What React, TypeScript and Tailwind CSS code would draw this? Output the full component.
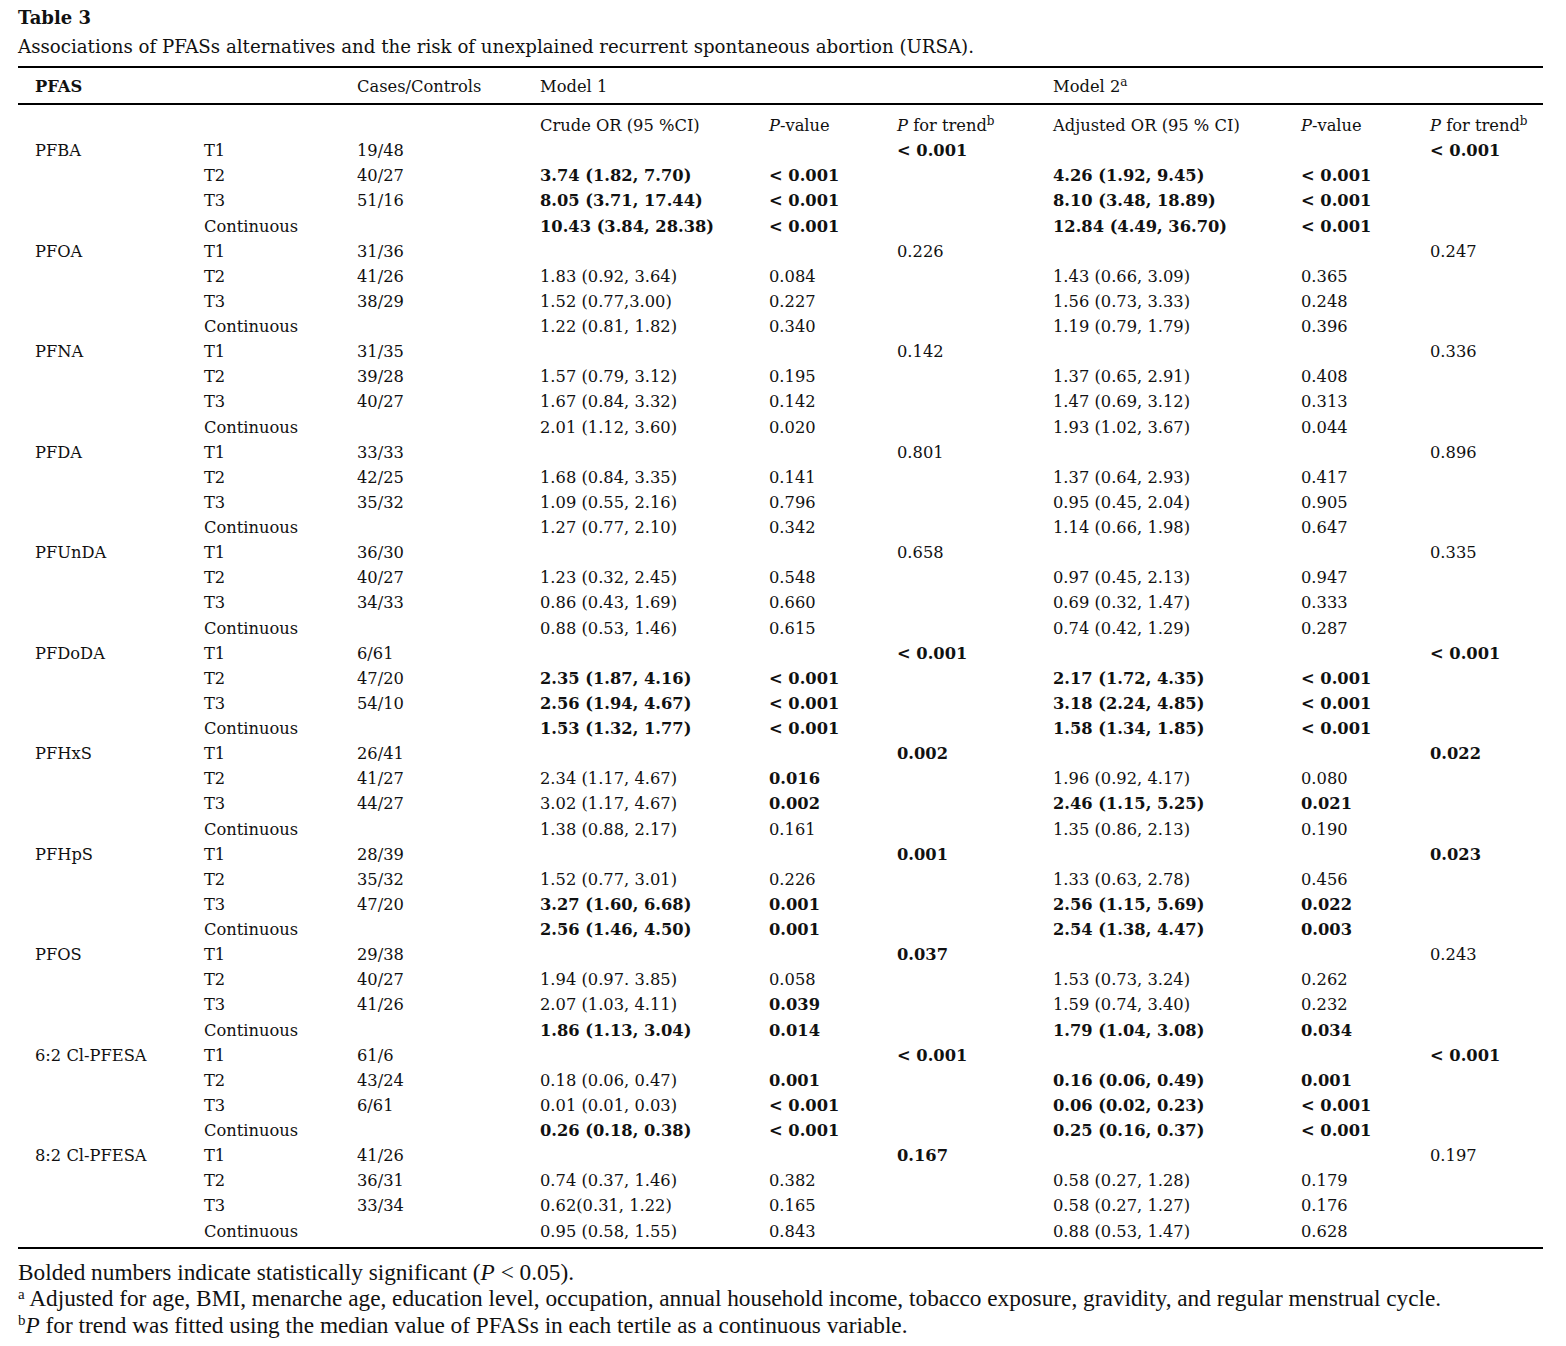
type Cell = { t: string; b?: boolean };

type Row = {
  name?: string;
  level: string;
  cc?: string;
  or1?: Cell;
  p1?: Cell;
  tr1?: Cell;
  or2?: Cell;
  p2?: Cell;
  tr2?: Cell;
};

const n = (t: string): Cell => ({ t });
const b = (t: string): Cell => ({ t, b: true });

// one block per compound: T1 / T2 / T3 / Continuous
function block(
  name: string,
  cc: [string, string, string],
  tr1: Cell,
  tr2: Cell,
  t2: [Cell, Cell, Cell, Cell],
  t3: [Cell, Cell, Cell, Cell],
  cont: [Cell, Cell, Cell, Cell],
): Row[] {
  return [
    { name, level: 'T1', cc: cc[0], tr1, tr2 },
    { level: 'T2', cc: cc[1], or1: t2[0], p1: t2[1], or2: t2[2], p2: t2[3] },
    { level: 'T3', cc: cc[2], or1: t3[0], p1: t3[1], or2: t3[2], p2: t3[3] },
    { level: 'Continuous', or1: cont[0], p1: cont[1], or2: cont[2], p2: cont[3] },
  ];
}

const rows: Row[] = [
  ...block('PFBA', ['19/48', '40/27', '51/16'], b('< 0.001'), b('< 0.001'),
    [b('3.74 (1.82, 7.70)'), b('< 0.001'), b('4.26 (1.92, 9.45)'), b('< 0.001')],
    [b('8.05 (3.71, 17.44)'), b('< 0.001'), b('8.10 (3.48, 18.89)'), b('< 0.001')],
    [b('10.43 (3.84, 28.38)'), b('< 0.001'), b('12.84 (4.49, 36.70)'), b('< 0.001')]),
  ...block('PFOA', ['31/36', '41/26', '38/29'], n('0.226'), n('0.247'),
    [n('1.83 (0.92, 3.64)'), n('0.084'), n('1.43 (0.66, 3.09)'), n('0.365')],
    [n('1.52 (0.77,3.00)'), n('0.227'), n('1.56 (0.73, 3.33)'), n('0.248')],
    [n('1.22 (0.81, 1.82)'), n('0.340'), n('1.19 (0.79, 1.79)'), n('0.396')]),
  ...block('PFNA', ['31/35', '39/28', '40/27'], n('0.142'), n('0.336'),
    [n('1.57 (0.79, 3.12)'), n('0.195'), n('1.37 (0.65, 2.91)'), n('0.408')],
    [n('1.67 (0.84, 3.32)'), n('0.142'), n('1.47 (0.69, 3.12)'), n('0.313')],
    [n('2.01 (1.12, 3.60)'), n('0.020'), n('1.93 (1.02, 3.67)'), n('0.044')]),
  ...block('PFDA', ['33/33', '42/25', '35/32'], n('0.801'), n('0.896'),
    [n('1.68 (0.84, 3.35)'), n('0.141'), n('1.37 (0.64, 2.93)'), n('0.417')],
    [n('1.09 (0.55, 2.16)'), n('0.796'), n('0.95 (0.45, 2.04)'), n('0.905')],
    [n('1.27 (0.77, 2.10)'), n('0.342'), n('1.14 (0.66, 1.98)'), n('0.647')]),
  ...block('PFUnDA', ['36/30', '40/27', '34/33'], n('0.658'), n('0.335'),
    [n('1.23 (0.32, 2.45)'), n('0.548'), n('0.97 (0.45, 2.13)'), n('0.947')],
    [n('0.86 (0.43, 1.69)'), n('0.660'), n('0.69 (0.32, 1.47)'), n('0.333')],
    [n('0.88 (0.53, 1.46)'), n('0.615'), n('0.74 (0.42, 1.29)'), n('0.287')]),
  ...block('PFDoDA', ['6/61', '47/20', '54/10'], b('< 0.001'), b('< 0.001'),
    [b('2.35 (1.87, 4.16)'), b('< 0.001'), b('2.17 (1.72, 4.35)'), b('< 0.001')],
    [b('2.56 (1.94, 4.67)'), b('< 0.001'), b('3.18 (2.24, 4.85)'), b('< 0.001')],
    [b('1.53 (1.32, 1.77)'), b('< 0.001'), b('1.58 (1.34, 1.85)'), b('< 0.001')]),
  ...block('PFHxS', ['26/41', '41/27', '44/27'], b('0.002'), b('0.022'),
    [n('2.34 (1.17, 4.67)'), b('0.016'), n('1.96 (0.92, 4.17)'), n('0.080')],
    [n('3.02 (1.17, 4.67)'), b('0.002'), b('2.46 (1.15, 5.25)'), b('0.021')],
    [n('1.38 (0.88, 2.17)'), n('0.161'), n('1.35 (0.86, 2.13)'), n('0.190')]),
  ...block('PFHpS', ['28/39', '35/32', '47/20'], b('0.001'), b('0.023'),
    [n('1.52 (0.77, 3.01)'), n('0.226'), n('1.33 (0.63, 2.78)'), n('0.456')],
    [b('3.27 (1.60, 6.68)'), b('0.001'), b('2.56 (1.15, 5.69)'), b('0.022')],
    [b('2.56 (1.46, 4.50)'), b('0.001'), b('2.54 (1.38, 4.47)'), b('0.003')]),
  ...block('PFOS', ['29/38', '40/27', '41/26'], b('0.037'), n('0.243'),
    [n('1.94 (0.97. 3.85)'), n('0.058'), n('1.53 (0.73, 3.24)'), n('0.262')],
    [n('2.07 (1.03, 4.11)'), b('0.039'), n('1.59 (0.74, 3.40)'), n('0.232')],
    [b('1.86 (1.13, 3.04)'), b('0.014'), b('1.79 (1.04, 3.08)'), b('0.034')]),
  ...block('6:2 Cl-PFESA', ['61/6', '43/24', '6/61'], b('< 0.001'), b('< 0.001'),
    [n('0.18 (0.06, 0.47)'), b('0.001'), b('0.16 (0.06, 0.49)'), b('0.001')],
    [n('0.01 (0.01, 0.03)'), b('< 0.001'), b('0.06 (0.02, 0.23)'), b('< 0.001')],
    [b('0.26 (0.18, 0.38)'), b('< 0.001'), b('0.25 (0.16, 0.37)'), b('< 0.001')]),
  ...block('8:2 Cl-PFESA', ['41/26', '36/31', '33/34'], b('0.167'), n('0.197'),
    [n('0.74 (0.37, 1.46)'), n('0.382'), n('0.58 (0.27, 1.28)'), n('0.179')],
    [n('0.62(0.31, 1.22)'), n('0.165'), n('0.58 (0.27, 1.27)'), n('0.176')],
    [n('0.95 (0.58, 1.55)'), n('0.843'), n('0.88 (0.53, 1.47)'), n('0.628')]),
];

const grid =
  'grid grid-cols-[169px_153px_183px_229px_128px_156px_248px_129px_113px] pl-[17px]';

function C({ c }: { c?: Cell }) {
  if (!c) return <div />;
  return <div className={c.b ? 'font-bold' : ''}>{c.t}</div>;
}

function TrendHead() {
  return (
    <div>
      <i>P</i> for trend<sup className="text-[12px]">b</sup>
    </div>
  );
}

export default function App() {
  return (
    <div className="min-h-[1346px] bg-white px-[18px] pt-[5px] text-[#111] [font-family:'DejaVu_Serif',serif]">
      <div className="text-[18px] font-bold leading-[25px]">Table 3</div>
      <div className="text-[18.2px] leading-[34px]">
        Associations of PFASs alternatives and the risk of unexplained recurrent spontaneous abortion (URSA).
      </div>

      <div className="mt-[2px] w-[1525px] border-t-2 border-b-2 border-black text-[16.3px]">
        <div className={`${grid} pt-[6px] pb-[4px] leading-[25px]`}>
          <div className="font-bold">PFAS</div>
          <div />
          <div>Cases/Controls</div>
          <div className="col-span-3">Model 1</div>
          <div className="col-span-3">
            Model 2<sup className="text-[12px]">a</sup>
          </div>
        </div>
        <div className="border-t-2 border-black pt-[8px]">
          <div className={`${grid} leading-[25.12px]`}>
            <div />
            <div />
            <div />
            <div>Crude OR (95 %CI)</div>
            <div>
              <i>P</i>-value
            </div>
            <TrendHead />
            <div>Adjusted OR (95 % CI)</div>
            <div>
              <i>P</i>-value
            </div>
            <TrendHead />
          </div>
          {rows.map((r, i) => (
            <div key={i} className={`${grid} leading-[25.12px]`}>
              <div>{r.name ?? ''}</div>
              <div>{r.level}</div>
              <div>{r.cc ?? ''}</div>
              <C c={r.or1} />
              <C c={r.p1} />
              <C c={r.tr1} />
              <C c={r.or2} />
              <C c={r.p2} />
              <C c={r.tr2} />
            </div>
          ))}
          <div className="h-[3px]" />
        </div>
      </div>

      <div className="mt-[10px] text-[23.3px] leading-[26.5px] [font-family:'Liberation_Serif',serif]">
        <div>
          Bolded numbers indicate statistically significant (<i>P</i> &lt; 0.05).
        </div>
        <div>
          <sup className="text-[15px]">a</sup> Adjusted for age, BMI, menarche age, education level, occupation, annual
          household income, tobacco exposure, gravidity, and regular menstrual cycle.
        </div>
        <div>
          <sup className="text-[15px]">b</sup>
          <i>P</i> for trend was fitted using the median value of PFASs in each tertile as a continuous variable.
        </div>
      </div>
    </div>
  );
}
